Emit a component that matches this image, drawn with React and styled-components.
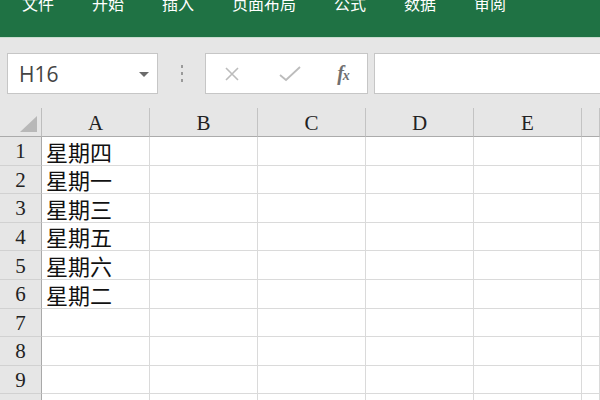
import React from "react";
import styled, { createGlobalStyle } from "styled-components";

const GlobalStyle = createGlobalStyle`
  html, body {
    margin: 0;
    padding: 0;
    width: 600px;
    height: 400px;
    overflow: hidden;
    background: #e6e6e6;
  }
  * { box-sizing: border-box; }
`;

const Page = styled.div`
  width: 600px;
  height: 400px;
  overflow: hidden;
  display: flex;
  flex-direction: column;

  & > * {
    flex-shrink: 0;
  }
`;

// green ribbon tab strip
const TabBar = styled.div`
  height: 37px;
  background: #1f7244;
  display: flex;
  align-items: flex-start;
  gap: 38px;
  padding-left: 22px;
  border-bottom: 1px solid #c9dccf;
  box-sizing: content-box;
  overflow: hidden;
`;

const Tab = styled.span`
  color: #fff;
  font-family: "Noto Sans CJK SC", sans-serif;
  font-size: 16px;
  line-height: 16px;
  margin-top: -5px;
  white-space: nowrap;
`;

// name box + formula bar
const FormulaRow = styled.div`
  display: flex;
  align-items: center;
  padding: 15px 0 14px 7px;
`;

const NameBox = styled.div`
  width: 151px;
  height: 41px;
  background: #fff;
  border: 1px solid #c6c6c6;
  display: flex;
  align-items: center;
  justify-content: space-between;
  padding: 0 8px 0 11px;
  font-family: "Open Sans", "Liberation Sans", sans-serif;
  font-size: 21px;
  color: #444;
`;

const Caret = styled.span`
  width: 0;
  height: 0;
  border-left: 5px solid transparent;
  border-right: 5px solid transparent;
  border-top: 5px solid #6b6b6b;
  margin-top: 1px;
`;

const Grip = styled.div`
  width: 47px;
  display: flex;
  flex-direction: column;
  align-items: center;
  gap: 4px;
`;

const GripDot = styled.span`
  width: 2px;
  height: 3px;
  background: #9a9a9a;
`;

const ActionBox = styled.div`
  width: 163px;
  height: 41px;
  background: #fff;
  border: 1px solid #c6c6c6;
  display: flex;
  align-items: center;
  padding-left: 17px;
`;

const ActionIcon = styled.span`
  display: flex;
  align-items: center;
  justify-content: center;
  width: ${(p) => p.w}px;
  margin-right: ${(p) => p.gap}px;
`;

const Fx = styled.span`
  font-family: "Liberation Serif", serif;
  font-style: italic;
  font-weight: bold;
  font-size: 20px;
  color: #707070;
  letter-spacing: -1px;

  & small {
    font-size: 14px;
  }
`;

const FormulaInput = styled.div`
  flex: 1;
  height: 41px;
  margin-left: 6px;
  margin-right: -10px;
  background: #fff;
  border: 1px solid #c6c6c6;
`;

// worksheet grid
const Sheet = styled.div`
  display: grid;
  grid-template-columns: 42px repeat(5, 108px) 1fr;
  grid-auto-rows: 28.6px;
  grid-template-rows: 29px;
  background: #fff;
`;

const Corner = styled.div`
  background: #e6e6e6;
  border-right: 1px solid #bdbdbd;
  border-bottom: 1px solid #ababab;
  display: flex;
  align-items: flex-end;
  justify-content: flex-end;
  padding: 0 4px 4px 0;
`;

const headFont = `
  font-family: "Liberation Serif", "DejaVu Serif", serif;
  font-size: 21px;
  color: #222;
`;

const ColHead = styled.div`
  background: #e6e6e6;
  border-right: 1px solid #c3c3c3;
  border-bottom: 1px solid #ababab;
  display: flex;
  align-items: center;
  justify-content: center;
  ${headFont}
  padding-top: 2px;
`;

const RowHead = styled.div`
  background: #e6e6e6;
  border-right: 1px solid #a9a9a9;
  border-bottom: 1px solid #d1d1d1;
  display: flex;
  align-items: center;
  justify-content: center;
  ${headFont}
  padding-top: 2px;
`;

const Cell = styled.div`
  border-right: 1px solid #dadada;
  border-bottom: 1px solid #dadada;
  display: flex;
  align-items: flex-end;
  padding: 0 0 1px 4px;
  font-family: "Noto Sans CJK SC", sans-serif;
  font-size: 22px;
  line-height: 26px;
  color: #111;
  white-space: nowrap;
`;

const tabs = ["文件", "开始", "插入", "页面布局", "公式", "数据", "审阅"];
const cols = ["A", "B", "C", "D", "E", ""];
const days = ["星期四", "星期一", "星期三", "星期五", "星期六", "星期二"];

export default function App() {
  const rows = Array.from({ length: 10 }, (_, i) => i + 1);
  return (
    <Page>
      <GlobalStyle />
      <TabBar>
        {tabs.map((t) => (
          <Tab key={t}>{t}</Tab>
        ))}
      </TabBar>

      <FormulaRow>
        <NameBox>
          <span>H16</span>
          <Caret />
        </NameBox>
        <Grip>
          <GripDot />
          <GripDot />
          <GripDot />
        </Grip>
        <ActionBox>
          <ActionIcon w={18} gap={38}>
            <svg width="16" height="16" viewBox="0 0 16 16">
              <path d="M2 2 L14 14 M14 2 L2 14" stroke="#bcbcbc" strokeWidth="1.6" fill="none" />
            </svg>
          </ActionIcon>
          <ActionIcon w={22} gap={33}>
            <svg width="22" height="16" viewBox="0 0 22 16">
              <path d="M1 9 L7 14 L21 1" stroke="#bcbcbc" strokeWidth="1.8" fill="none" />
            </svg>
          </ActionIcon>
          <ActionIcon w={18} gap={0}>
            <Fx>
              f<small>x</small>
            </Fx>
          </ActionIcon>
        </ActionBox>
        <FormulaInput />
      </FormulaRow>

      <Sheet>
        <Corner>
          <svg width="17" height="16" viewBox="0 0 17 16">
            <polygon points="17,0 17,16 0,16" fill="#b8b8b8" />
          </svg>
        </Corner>
        {cols.map((c, i) => (
          <ColHead key={"h" + i}>{c}</ColHead>
        ))}
        {rows.map((r) => (
          <React.Fragment key={r}>
            <RowHead>{r}</RowHead>
            {cols.map((_, ci) => (
              <Cell key={ci}>{ci === 0 ? days[r - 1] : ""}</Cell>
            ))}
          </React.Fragment>
        ))}
      </Sheet>
    </Page>
  );
}
